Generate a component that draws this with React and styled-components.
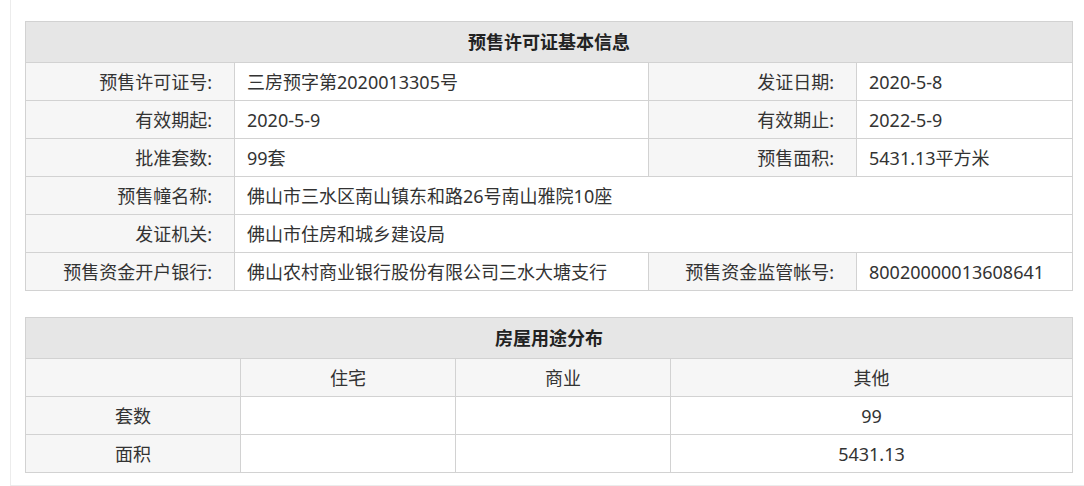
import styled, { createGlobalStyle } from "styled-components"

const GlobalStyle = createGlobalStyle`
    body {
        margin: 0;
        background: #FFFFFF;
        font-family: "Noto Sans", "Noto Sans CJK SC", sans-serif;
        color: #333;
    }
`

const Page = styled.div`
    padding-left: 10px;
`

const Card = styled.div`
    width: 1075px;
    padding: 21px 0 12px 14px;
    border-left: 1px solid #ececec;
    border-right: 1px solid #ececec;
    border-bottom: 1px solid #ececec;
    box-sizing: border-box;
`

const Table = styled.table`
    width: 1047px;
    border-collapse: collapse;
    table-layout: fixed;
    margin-bottom: ${(p) => p.$gap || 0}px;
    font-size: 18px;

    th, td {
        border: 1px solid #d2d2d2;
        height: 38px;
        padding: 0;
        box-sizing: border-box;
        white-space: nowrap;
        color: #333;
        line-height: 22px;
    }
`

const Head = styled.th`
    background: #e6e6e6;
    font-weight: bold;
    text-align: center;
    && {
        height: 41px;
        color: #222;
    }
`

const Label = styled.td`
    background: #f6f6f6;
    text-align: ${(p) => (p.$center ? "center" : "right")};
    padding-right: ${(p) => (p.$center ? 0 : 22)}px !important;
`

const Value = styled.td`
    background: #fff;
    text-align: ${(p) => (p.$center ? "center" : "left")};
    padding-left: ${(p) => (p.$center ? 0 : 12)}px !important;
`

const info = [
    ["预售许可证号:", "三房预字第2020013305号", "发证日期:", "2020-5-8"],
    ["有效期起:", "2020-5-9", "有效期止:", "2022-5-9"],
    ["批准套数:", "99套", "预售面积:", "5431.13平方米"],
    ["预售幢名称:", "佛山市三水区南山镇东和路26号南山雅院10座"],
    ["发证机关:", "佛山市住房和城乡建设局"],
    ["预售资金开户银行:", "佛山农村商业银行股份有限公司三水大塘支行", "预售资金监管帐号:", "80020000013608641"],
]

const usage = [
    ["套数", "", "", "99"],
    ["面积", "", "", "5431.13"],
]

export default function App() {
    return (
        <Page>
            <GlobalStyle />
            <Card>
                <Table $gap={26}>
                    <colgroup>
                        <col style={{ width: 209 }} />
                        <col style={{ width: 414 }} />
                        <col style={{ width: 208 }} />
                        <col style={{ width: 216 }} />
                    </colgroup>
                    <thead>
                        <tr>
                            <Head colSpan={4}>预售许可证基本信息</Head>
                        </tr>
                    </thead>
                    <tbody>
                        {info.map((r) => (
                            <tr key={r[0]}>
                                <Label>{r[0]}</Label>
                                {r.length === 4 ? (
                                    <>
                                        <Value>{r[1]}</Value>
                                        <Label>{r[2]}</Label>
                                        <Value>{r[3]}</Value>
                                    </>
                                ) : (
                                    <Value colSpan={3}>{r[1]}</Value>
                                )}
                            </tr>
                        ))}
                    </tbody>
                </Table>
                <Table>
                    <colgroup>
                        <col style={{ width: 215 }} />
                        <col style={{ width: 215 }} />
                        <col style={{ width: 215 }} />
                        <col style={{ width: 402 }} />
                    </colgroup>
                    <thead>
                        <tr>
                            <Head colSpan={4}>房屋用途分布</Head>
                        </tr>
                    </thead>
                    <tbody>
                        <tr>
                            <Label $center></Label>
                            <Label $center>住宅</Label>
                            <Label $center>商业</Label>
                            <Label $center>其他</Label>
                        </tr>
                        {usage.map((r) => (
                            <tr key={r[0]}>
                                <Label $center>{r[0]}</Label>
                                <Value $center>{r[1]}</Value>
                                <Value $center>{r[2]}</Value>
                                <Value $center>{r[3]}</Value>
                            </tr>
                        ))}
                    </tbody>
                </Table>
            </Card>
        </Page>
    )
}
